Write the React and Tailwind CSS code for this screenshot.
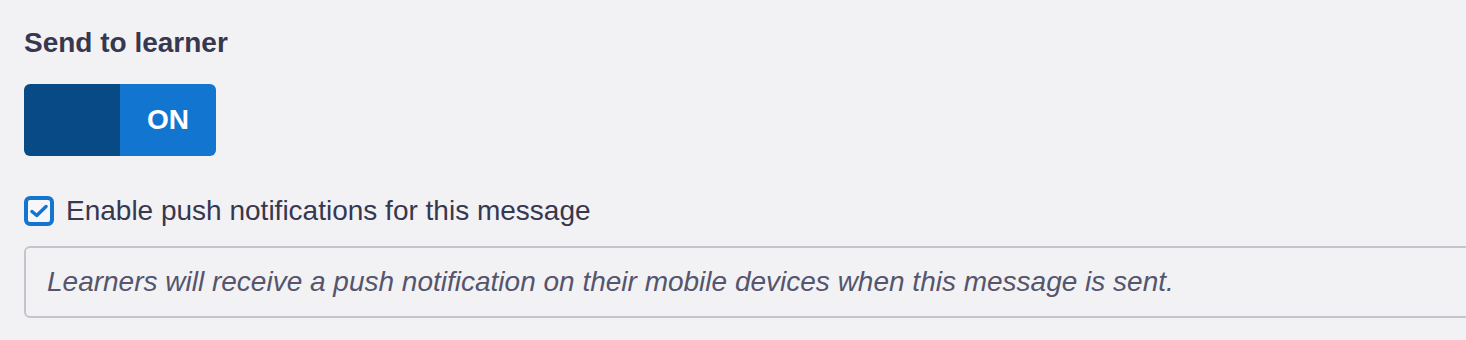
import React from "react";

// Notification settings block: send toggle, push checkbox and hint box.
const Toggle = ({ on }) => (
    <div className="flex h-[72px] w-[192px] overflow-hidden rounded-[6px]">
        <div className="w-1/2 bg-[#084a86]" />
        <div className="flex w-1/2 items-center justify-center bg-[#1275cf] text-[28px] font-bold text-white">
            {on ? "ON" : "OFF"}
        </div>
    </div>
);

const CheckBox = () => (
    <div className="flex h-[30px] w-[30px] items-center justify-center rounded-[6px] border-[4px] border-[#1275cf] bg-[#f7f7f9]">
        <svg width="18" height="14" viewBox="0 0 18 14" fill="none">
            <path d="M2 7.5 L6.8 11.5 L16 2.5" stroke="#1275cf" strokeWidth="3.4" strokeLinecap="round" strokeLinejoin="round" />
        </svg>
    </div>
);

export default function App() {
    return (
        <div className="h-[340px] w-full overflow-hidden bg-[#f2f2f5] pl-6 pt-6 font-['Liberation_Sans',Arial,sans-serif]">
            <h2 className="mt-px text-[28px] font-bold leading-[36px] text-[#37374f]">Send to learner</h2>

            <div className="mt-[23px]">
                <Toggle on />
            </div>

            <label className="mt-[37px] flex items-center">
                <CheckBox />
                <span className="ml-[12px] text-[28px] leading-[36px] text-[#37374f]">
                    Enable push notifications for this message
                </span>
            </label>

            <div className="mt-[17px] flex h-[72px] w-[1480px] items-center rounded-[6px] border-2 border-[#c4c4cc] pl-[21px]">
                <p className="text-[28px] italic leading-[36px] text-[#55556d]">
                    Learners will receive a push notification on their mobile devices when this message is sent.
                </p>
            </div>
        </div>
    );
}
